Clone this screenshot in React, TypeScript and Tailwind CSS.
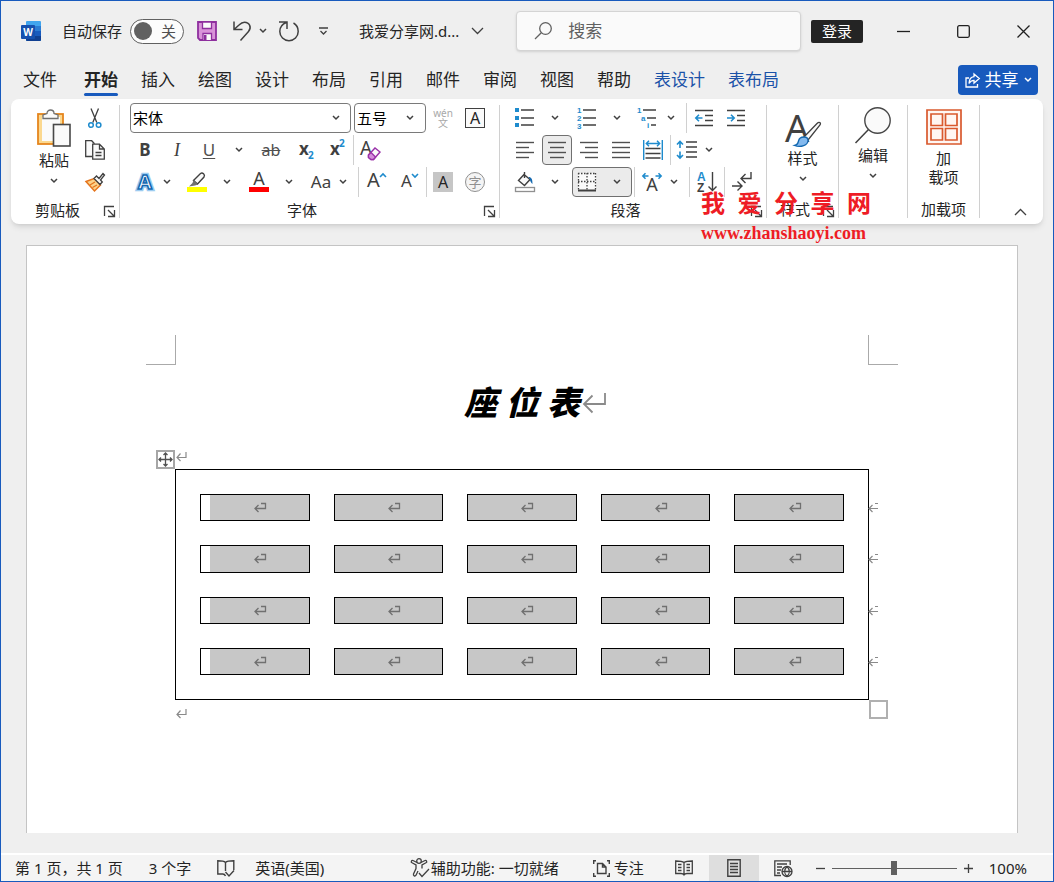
import type { ReactNode } from "react";
import clsx from "clsx";

const INK = "#404040";
const BLUE = "#1e8bcd";

const TABS = ["文件", "开始", "插入", "绘图", "设计", "布局", "引用", "邮件", "审阅", "视图", "帮助", "表设计", "表布局"];
const ROWS = [1, 2, 3, 4];
const COLS = [1, 2, 3, 4, 5];

type SvgProps = { w?: number; h?: number; className?: string; children: ReactNode };

function Svg({ w = 20, h = 20, className, children }: SvgProps) {
  return (
    <svg
      width={w}
      height={h}
      viewBox={`0 0 ${w} ${h}`}
      fill="none"
      stroke={INK}
      strokeWidth="1.3"
      className={clsx("shrink-0 overflow-visible", className)}
      aria-hidden="true"
    >
      {children}
    </svg>
  );
}

function Chevron({ big = false }: { big?: boolean }) {
  return big ? (
    <Svg w={13} h={8}>
      <path d="M1 1l5.5 5.5L12 1" />
    </Svg>
  ) : (
    <Svg w={8} h={6}>
      <path d="M1 1l3 3 3-3" strokeWidth="1.5" />
    </Svg>
  );
}

function Tool({ label, className = "w-8", children }: { label: string; className?: string; children: ReactNode }) {
  return (
    <button type="button" aria-label={label} className={clsx("flex h-8 shrink-0 items-center justify-center", className)}>
      {children}
    </button>
  );
}

function More({ label, className = "w-3" }: { label: string; className?: string }) {
  return (
    <Tool label={label} className={className}>
      <Chevron />
    </Tool>
  );
}

function Sep({ className }: { className?: string }) {
  return <span className={clsx("h-[30px] w-px shrink-0 bg-[#d0d0d0]", className)} />;
}

function Row({ children }: { children: ReactNode }) {
  return <div className="flex h-8 items-center">{children}</div>;
}

function Group({ name, className, launcher = false, children }: { name?: string; className: string; launcher?: boolean; children: ReactNode }) {
  return (
    <div className={clsx("flex shrink-0 flex-col", className)}>
      <div className="h-24">{children}</div>
      <div className={clsx("flex h-6 items-center", launcher && "pr-1")}>
        <span className="flex-1 text-center">{name}</span>
        {launcher && (
          <button type="button" aria-label={`${name}设置`} className="pt-1">
            <Svg w={11} h={11}>
              <path d="M.5 10V.5H10M4 4l6 6M10.500 4v6.500H4" />
            </Svg>
          </button>
        )}
      </div>
    </div>
  );
}

function Divider() {
  return <span className="my-[3px] w-px shrink-0 bg-[#d0d0d0]" />;
}

function ReturnMark() {
  return (
    <Svg w={11} h={10}>
      <path d="M10 0v5.500H1M4.500 1.500L1 5.500l3.500 3.500" stroke="#8a8a8a" strokeWidth="1.2" />
    </Svg>
  );
}

function CellMark() {
  return (
    <Svg w={12} h={11}>
      <path d="M7 1.500h4.500v5H1M4.500 3L1 6.500 4.500 10" stroke="#707070" strokeWidth="1.3" />
    </Svg>
  );
}

function RowEndMark() {
  return (
    <Svg w={10} h={11}>
      <path d="M7 1.500h3M10 6.500H1M4.500 3L1 6.500 4.500 10" stroke="#8a8a8a" strokeWidth="1.2" />
    </Svg>
  );
}

// one line per paragraph row, given as [start, end] pairs
function Lines({ rows }: { rows: number[][] }) {
  return (
    <Svg w={18} h={18}>
      {rows.map(([a, b], i) => (
        <path key={i} d={`M${a} ${i * 5 + 1.5}H${b}`} stroke="#505050" strokeWidth="1.4" />
      ))}
    </Svg>
  );
}

function TitleBar() {
  return (
    <header className="flex h-[60px] items-center pl-5">
      <Svg className="mr-[21px]">
        <g stroke="none">
          <rect x="5" width="15" height="20" rx="1" fill="#41a5ee" />
          <path d="M5 5h15v5H5z" fill="#2b7cd3" />
          <path d="M5 10h15v5H5z" fill="#185abd" />
          <path d="M5 15h15v4a1 1 0 0 1-1 1H6a1 1 0 0 1-1-1z" fill="#103f91" />
          <rect y="4" width="14" height="14" rx="1" fill="#1650ae" />
          <text x="7" y="15" fontSize="10" fontWeight="700" textAnchor="middle" fill="#fff">W</text>
        </g>
      </Svg>
      <label className="flex items-center gap-2">
        自动保存
        <span className="relative flex">
          <input type="checkbox" role="switch" className="h-[25px] w-[54px] appearance-none rounded-full border border-[#606060] bg-[#fcfcfc]" />
          <span className="pointer-events-none absolute inset-0 flex items-center justify-between pr-2 pl-1">
            <span className="size-[18px] rounded-full bg-[#616161]" />
            <span className="text-[#505050]">关</span>
          </span>
        </span>
      </label>
      <button type="button" aria-label="保存" className="ml-[13px]">
        <Svg>
          <path d="M1 1h18v18H3l-2-2z" fill="#d993d9" stroke="#8e2f9e" strokeWidth="1.800" />
          <path d="M5.500 1h9v6.500h-9z" fill="#fafafa" stroke="#8e2f9e" />
          <path d="M6 19v-6.500h8.500V19" fill="#fafafa" stroke="#8e2f9e" />
          <path d="M7 14h2.500v5H7z" fill="#8e2f9e" stroke="none" />
        </Svg>
      </button>
      <button type="button" aria-label="撤消" className="ml-4">
        <Svg w={19}>
          <path d="M1 .5v8h8.500M1.300 8.200L6 4C8 2 9.500 1.200 11.500 1.200c5 0 7.500 5.500 4 9.300L7.500 19.500" strokeWidth="1.500" />
        </Svg>
      </button>
      <button type="button" aria-label="撤消列表" className="ml-[7px]">
        <Chevron />
      </button>
      <button type="button" aria-label="重复" className="ml-3">
        <Svg>
          <path d="M0 1h8v7M7.500 1.500C3.300 3 .8 6.500.8 10.500a9.200 9.200 0 0 0 18.400 0c0-4-2-7-4.700-8.500" strokeWidth="1.500" />
        </Svg>
      </button>
      <button type="button" aria-label="自定义快速访问工具栏" className="ml-5">
        <Svg w={9} h={8}>
          <path d="M0 1h9M1.500 4l3 3 3-3" />
        </Svg>
      </button>
      <button type="button" className="ml-[31px] flex items-center gap-3">
        我爱分享网.d...
        <Chevron big />
      </button>
      <label className="ml-8 flex h-10 flex-1 items-center gap-4 rounded-sm border border-[#d4d4d4] bg-[#fafafa] px-[17px] shadow-sm">
        <Svg w={18} h={18}>
          <circle cx="11.500" cy="6.500" r="5.800" stroke="#616161" />
          <path d="M7.300 10.800L1 17" stroke="#616161" />
        </Svg>
        <input type="text" aria-label="搜索" placeholder="搜索" className="w-full min-w-0 bg-transparent text-[17px] outline-none placeholder:text-[#616161]" />
      </label>
      <button type="button" className="mx-[10px] h-[23px] w-[52px] rounded-xs bg-[#242424] text-white">登录</button>
      <button type="button" aria-label="最小化" className="flex h-10 w-[60px] items-center justify-center">
        <Svg w={13} h={13}>
          <path d="M0 6.500h13" stroke="#202020" />
        </Svg>
      </button>
      <button type="button" aria-label="最大化" className="flex h-10 w-[60px] items-center justify-center">
        <Svg w={13} h={13}>
          <rect x=".7" y=".7" width="11.600" height="11.600" rx="1.500" stroke="#202020" />
        </Svg>
      </button>
      <button type="button" aria-label="关闭" className="flex h-10 w-[60px] items-center justify-center">
        <Svg w={13} h={13}>
          <path d="M.5.5l12 12M12.500.5l-12 12" stroke="#202020" />
        </Svg>
      </button>
    </header>
  );
}

function TabBar() {
  return (
    <nav className="flex h-[38px] items-center gap-[23px] pr-[15px] pl-[22px] text-[17px]">
      {TABS.map((t) => (
        <a
          key={t}
          href="#"
          className={clsx(
            "relative flex h-8 items-center whitespace-nowrap",
            t === "文件" && "mr-1",
            t === "开始" && "font-bold",
            t.startsWith("表") && "text-[#1a52a8]"
          )}
        >
          {t}
          {t === "开始" && <span className="absolute inset-x-0 bottom-0 h-[3px] rounded-full bg-[#185abd]" />}
        </a>
      ))}
      <button type="button" className="ml-auto flex h-[30px] w-20 items-center justify-center gap-[5px] rounded bg-[#185abd] text-white">
        <Svg w={15} h={15}>
          <g stroke="#fff">
            <path d="M4 5H1v9h11.500v-3" />
            <path d="M9 1l5.300 4.500L9 10V7.300C6.500 7.300 5 8.500 4 10.500 4.200 6.500 6 4 9 3.700z" />
          </g>
        </Svg>
        共享
        <Svg w={8} h={6}>
          <path d="M1 1l3 3 3-3" stroke="#fff" strokeWidth="1.500" />
        </Svg>
      </button>
    </nav>
  );
}

function ClipboardGroup() {
  return (
    <Group name="剪贴板" className="w-[108px]" launcher>
      <div className="flex">
        <button type="button" className="ml-[25px] flex w-9 flex-col items-center pt-[7px]">
          <Svg w={36} h={38}>
            <rect x="2" y="5" width="25" height="30" fill="#fbd88f" stroke="#e5851d" strokeWidth="1.800" />
            <path d="M6 8h18v24H6z" fill="#fafafa" stroke="none" />
            <path d="M7 9.500V6l4-1.500C11 2.500 12.500 1 14.500 1S18 2.500 18 4.500L22 6v3.500z" fill="#fafafa" stroke="#707070" />
            <rect x="17.500" y="15.500" width="16.500" height="21.500" fill="#fafafa" stroke="#484848" strokeWidth="1.600" />
          </Svg>
          <span className="mt-[3px] leading-5">粘贴</span>
          <span className="mt-2">
            <Chevron />
          </span>
        </button>
        <div className="ml-[7px] flex flex-col">
          <Tool label="剪切">
            <Svg>
              <path d="M6 .5l5.800 14M13.500 .5L7.800 14.500" />
              <circle cx="6" cy="17" r="2.300" stroke={BLUE} strokeWidth="1.500" />
              <circle cx="13.600" cy="17" r="2.300" stroke={BLUE} strokeWidth="1.500" />
            </Svg>
          </Tool>
          <Tool label="复制">
            <Svg>
              <path d="M7 16.500H.7V.7h6l2.800 3" fill="#fafafa" />
              <path d="M7.700 4.200h6.800l4.800 4.800v10.200H7.700zM14.500 4.200V9h4.800M10.500 12.500h6M10.500 15.500h6" fill="#fafafa" />
            </Svg>
          </Tool>
          <Tool label="格式刷">
            <Svg>
              <path d="M1 9.500L9 6.500l6.500 6.500-6 6z" fill="#fbd28a" stroke="#e5751d" strokeWidth="1.500" />
              <path d="M5 13l5-3M7.500 15.500l4.500-2.500" stroke="#e5751d" />
              <path d="M9 6.500L11.500 4l2.500 2.500L18 1.500l1.500 1.500-4 5 1.800 2-2.300 2.500z" fill="#fafafa" />
            </Svg>
          </Tool>
        </div>
      </div>
    </Group>
  );
}

function FontGroup() {
  return (
    <Group name="字体" className="w-[379px]" launcher>
      <Row>
        <label className="relative ml-[10px] flex items-center">
          <select aria-label="字体" className="h-[30px] w-[221px] appearance-none rounded border border-[#7a7a7a] bg-white pl-[2px] text-black">
            <option>宋体</option>
          </select>
          <span className="pointer-events-none absolute right-[11px]">
            <Chevron />
          </span>
        </label>
        <label className="relative ml-[3px] flex items-center">
          <select aria-label="字号" className="h-[30px] w-[72px] appearance-none rounded border border-[#7a7a7a] bg-white pl-[2px] text-black">
            <option>五号</option>
          </select>
          <span className="pointer-events-none absolute right-3">
            <Chevron />
          </span>
        </label>
        <Tool label="拼音指南" className="ml-px w-8">
          <span className="flex flex-col items-center text-[10px] leading-[10px] text-[#a8a8a8]">
            <span>wén</span>
            <span>文</span>
          </span>
        </Tool>
        <Tool label="字符边框">
          <span className="flex size-5 items-center justify-center border border-[#404040] bg-[#fafafa] text-base leading-none">A</span>
        </Tool>
      </Row>
      <Row>
        <Tool label="加粗" className="ml-[9px] w-8">
          <span className="text-[17px] font-bold text-[#404040]">B</span>
        </Tool>
        <Tool label="倾斜">
          <span className="font-['Liberation_Serif',serif] text-lg text-[#404040] italic">I</span>
        </Tool>
        <Tool label="下划线">
          <span className="text-[17px] text-[#505050] underline underline-offset-2">U</span>
        </Tool>
        <More label="下划线样式" className="w-7" />
        <Tool label="删除线" className="w-9">
          <span className="text-base text-[#505050] line-through">ab</span>
        </Tool>
        <Tool label="下标">
          <Svg>
            <g stroke="none" fontWeight="700">
              <text x="4" y="15" fontSize="17" fill={INK}>x</text>
              <text x="13" y="19" fontSize="10" fill={BLUE}>2</text>
            </g>
          </Svg>
        </Tool>
        <Tool label="上标">
          <Svg>
            <g stroke="none" fontWeight="700">
              <text x="3" y="15" fontSize="17" fill={INK}>x</text>
              <text x="12" y="7" fontSize="10" fill={BLUE}>2</text>
            </g>
          </Svg>
        </Tool>
        <Sep />
        <Tool label="清除格式">
          <Svg>
            <text x="0" y="15" fontSize="19" fill={INK} stroke="none">A</text>
            <path d="M8.500 15l6.500-7 5 4-6.500 7.500h-2.500l-2.500-2z" fill="#fafafa" stroke="#9a30a8" strokeWidth="1.400" />
            <path d="M8.500 15l2.500-2.500 4.500 4.500-2 2.500h-2.500l-2.500-2z" fill="#d58fdc" stroke="#9a30a8" strokeWidth="1.400" />
          </Svg>
        </Tool>
      </Row>
      <Row>
        <Tool label="文本效果" className="ml-[9px] w-8">
          <Svg>
            <g fontSize="20" fontWeight="700" textAnchor="middle">
              <text x="10" y="17" fill="#fff" stroke="#9ccbf0" strokeWidth="4.500" aria-hidden="true">A</text>
              <text x="10" y="17" fill="#fff" stroke="#1368b0" strokeWidth="1.600">A</text>
            </g>
          </Svg>
        </Tool>
        <More label="文本效果选项" />
        <Tool label="突出显示" className="w-12">
          <Svg>
            <path d="M0 15h20v5H0z" fill="#ff0" stroke="none" />
            <path d="M6.500 8.500L13.500 1.500c2-1.500 5 1 3.500 3.500L10.500 12z" fill="#fafafa" strokeWidth="1.400" />
            <path d="M6.500 8l4.500 4.500-3 1-6 1L5.500 11z" fill="#707070" stroke="none" />
          </Svg>
        </Tool>
        <More label="突出显示颜色" />
        <Tool label="字体颜色" className="w-13">
          <Svg>
            <path d="M0 15h20v5H0z" fill="#f00" stroke="none" />
            <text x="10" y="13" fontSize="18" textAnchor="middle" fill={INK} stroke="none">A</text>
          </Svg>
        </Tool>
        <More label="字体颜色选项" className="w-2" />
        <Tool label="更改大小写" className="ml-3 w-8">
          <span className="text-[17px] text-[#404040]">Aa</span>
        </Tool>
        <More label="大小写选项" />
        <Sep className="ml-[9px]" />
        <Tool label="增大字号" className="w-9">
          <Svg>
            <text x="0" y="15" fontSize="20" fill={INK} stroke="none">A</text>
            <path d="M13 5l3-3 3 3" stroke={BLUE} strokeWidth="1.600" />
          </Svg>
        </Tool>
        <Tool label="减小字号" className="w-7">
          <Svg>
            <text x="2" y="15" fontSize="17" fill={INK} stroke="none">A</text>
            <path d="M13 2l3 3 3-3" stroke={BLUE} strokeWidth="1.600" />
          </Svg>
        </Tool>
        <Sep className="ml-[3px]" />
        <Tool label="字符底纹">
          <span className="flex size-5 items-center justify-center bg-[#c6c6c6] text-base leading-none">A</span>
        </Tool>
        <Tool label="带圈字符">
          <span className="flex size-5 items-center justify-center rounded-full border border-[#909090] bg-[#f4f4f4] text-[13px] leading-none text-[#909090]">字</span>
        </Tool>
      </Row>
    </Group>
  );
}

function ParagraphGroup() {
  return (
    <Group name="段落" className="w-[266px]" launcher>
      <Row>
        <Tool label="项目符号" className="ml-[9px] w-8">
          <Svg>
            <path d="M0 0h4v4H0zM0 8h4v4H0zM0 15h4v4H0z" fill={BLUE} stroke="none" />
            <path d="M6 2h13M6 10h13M6 17h13" strokeWidth="1.400" />
          </Svg>
        </Tool>
        <More label="项目符号库" className="w-7" />
        <Tool label="编号" className="w-9">
          <Svg className="font-['Liberation_Sans',sans-serif]">
            <g stroke="none" fill={BLUE} fontSize="8" fontWeight="700">
              <text x="0" y="5">1</text>
              <text x="0" y="13">2</text>
              <text x="0" y="21">3</text>
            </g>
            <path d="M6 2h13M6 10h13M6 17h13" strokeWidth="1.400" />
          </Svg>
        </Tool>
        <More label="编号库" className="w-6" />
        <Tool label="多级列表" className="w-9">
          <Svg className="font-['Liberation_Sans',sans-serif]">
            <g stroke="none" fill={BLUE} fontSize="8" fontWeight="700">
              <text x="0" y="5">1</text>
              <text x="4" y="13">a</text>
              <text x="10" y="20">i</text>
            </g>
            <path d="M6 2h13M10 10h9M14 17h5" strokeWidth="1.400" />
          </Svg>
        </Tool>
        <More label="列表库" />
        <Sep className="ml-[9px]" />
        <Tool label="减少缩进" className="ml-px w-8">
          <Svg w={18} h={18}>
            <path d="M0 1.500h18M10 6.500h8M10 11.500h8M0 16.500h18" strokeWidth="1.400" />
            <path d="M7.500 9H1M4 5.800L.8 9 4 12.200" stroke={BLUE} strokeWidth="1.600" />
          </Svg>
        </Tool>
        <Tool label="增加缩进">
          <Svg w={18} h={18}>
            <path d="M0 1.500h18M10 6.500h8M10 11.500h8M0 16.500h18" strokeWidth="1.400" />
            <path d="M0 9h6.500M4 5.800L7.200 9 4 12.200" stroke={BLUE} strokeWidth="1.600" />
          </Svg>
        </Tool>
      </Row>
      <Row>
        <Tool label="左对齐" className="ml-[9px] w-8">
          <Lines rows={[[0, 18], [0, 13], [0, 18], [0, 13]]} />
        </Tool>
        <Tool label="居中">
          <span className="flex size-[30px] items-center justify-center rounded border border-[#707070] bg-[#ebebeb]">
            <Lines rows={[[0, 18], [2, 16], [0, 18], [2, 16]]} />
          </span>
        </Tool>
        <Tool label="右对齐">
          <Lines rows={[[0, 18], [5, 18], [0, 18], [5, 18]]} />
        </Tool>
        <Tool label="两端对齐">
          <Lines rows={[[0, 18], [0, 18], [0, 18], [0, 18]]} />
        </Tool>
        <Tool label="分散对齐">
          <Svg>
            <path d="M2.500 8.500h15M2.500 13.500h15M2.500 18h15" strokeWidth="1.400" />
            <path d="M.7 0v20M19.300 0v20M3.500 3.500h13M6 .8L3.300 3.500 6 6.200M14 .8l2.700 2.700L14 6.200" stroke={BLUE} strokeWidth="1.400" />
          </Svg>
        </Tool>
        <Sep className="ml-px" />
        <Tool label="行距">
          <Svg>
            <path d="M9 2h11M9 7h11M9 12h11M9 17h11" strokeWidth="1.400" />
            <path d="M3 1.500v6.500M0 4.500l3-3 3 3M3 11.500V18M0 15l3 3 3-3" stroke={BLUE} strokeWidth="1.600" />
          </Svg>
        </Tool>
        <More label="行距选项" />
      </Row>
      <Row>
        <Tool label="底纹" className="ml-[9px] w-8">
          <Svg>
            <path d="M9 2.500L3.500 8.500 9.500 13.500 15 7.500zM9.500 0v6" fill="#fafafa" strokeWidth="1.400" />
            <path d="M13.500 5c3 0 4 2 4 7-1.500-1.500-2.500-3-2.500-4.500z" fill="#1368b0" stroke="none" />
            <rect x=".5" y="15.500" width="19" height="4" fill="#fff" stroke="#909090" />
          </Svg>
        </Tool>
        <More label="底纹颜色" className="w-7" />
        <div className="ml-[3px] flex h-[30px] w-[60px] items-center rounded border border-[#707070] bg-[#ebebeb]">
          <Tool label="边框" className="w-7">
            <Svg>
              <path d="M1 1h18v18H1z" fill="#fafafa" stroke="none" />
              <path d="M1 1.500h18M1 9.500h18M1.500 1v17M10 1v17M18.500 1v17" strokeDasharray="1.500 1.500" />
              <path d="M1 18.500h18" strokeWidth="2" />
            </Svg>
          </Tool>
          <More label="边框选项" className="w-8" />
        </div>
        <Sep className="ml-[2px]" />
        <Tool label="中文版式" className="ml-px w-8">
          <Svg>
            <text x="10" y="19" fontSize="18" textAnchor="middle" fill={INK} stroke="none">A</text>
            <path d="M6.500 4H.8M3.500 1.200L.8 4l2.700 2.800M13.500 4h5.700M16.500 1.200L19.200 4l-2.700 2.800" stroke={BLUE} strokeWidth="1.500" />
          </Svg>
        </Tool>
        <More label="中文版式选项" />
        <Sep className="ml-[9px]" />
        <Tool label="排序" className="ml-px w-8">
          <Svg className="font-['Liberation_Sans',sans-serif]">
            <g stroke="none" fontSize="12">
              <text x="0" y="9" fontWeight="700" fill={BLUE}>A</text>
              <text x="0" y="20" fontWeight="700" fill={INK}>Z</text>
            </g>
            <path d="M15.500 0v18.500M11.500 14.500l4 4 4-4" strokeWidth="1.400" />
          </Svg>
        </Tool>
        <Sep className="ml-px" />
        <Tool label="显示编辑标记" className="ml-px w-8">
          <Svg>
            <path d="M19 0v6.500H9.500M13.500 2L9 6.500l4.500 4.500M0 14h9.500M5.500 9.500L10 14l-4.500 4.500" strokeWidth="1.400" />
          </Svg>
        </Tool>
      </Row>
    </Group>
  );
}

function Ribbon() {
  return (
    <section aria-label="开始" className="mx-[10px] flex h-[125px] rounded-lg bg-white py-[3px] shadow-md">
      <ClipboardGroup />
      <Divider />
      <FontGroup />
      <Divider />
      <ParagraphGroup />
      <Divider />
      <Group name="样式" className="w-[71px]" launcher>
        <button type="button" className="flex w-full flex-col items-center pt-[7px]">
          <Svg w={38} h={39}>
            <text x="1" y="33" fontSize="38" fill={INK} stroke="none">A</text>
            <path d="M20 28L33 14.500c2-2 4.500-1 3 1.500L24 31z" fill="#fafafa" />
            <path d="M20 28c2.500 0 4 1.500 4 3.500 0 4.500-7 7.500-13.500 5 2.500-.5 3.500-2 4-4.500.5-2.500 3-4 5.500-4z" fill="#83b9ee" stroke="#1368b0" />
          </Svg>
          <span className="leading-5">样式</span>
          <span className="mt-2">
            <Chevron />
          </span>
        </button>
      </Group>
      <Divider />
      <Group className="w-[68px]">
        <button type="button" className="flex w-full flex-col items-center pt-[5px]">
          <Svg w={36} h={38}>
            <circle cx="22.500" cy="13.500" r="12.700" fill="#fafafa" stroke="#484848" strokeWidth="1.400" />
            <path d="M13.500 22.500L.5 36" strokeWidth="1.500" />
          </Svg>
          <span className="leading-5">编辑</span>
          <span className="mt-2">
            <Chevron />
          </span>
        </button>
      </Group>
      <Divider />
      <Group name="加载项" className="w-[71px]">
        <button type="button" className="flex w-full flex-col items-center pt-[7px] leading-[19px]">
          <Svg w={36} h={36}>
            <path d="M1 1h34v34H1zM5 5h11.500v11.500H5zM19.500 5H31v11.500H19.500zM5 19.500h11.500V31H5zM19.500 19.500H31V31H19.500z" fill="#fff6f2" stroke="#d9592e" strokeWidth="1.700" />
          </Svg>
          <span className="mt-1">加</span>
          <span>载项</span>
        </button>
      </Group>
      <Divider />
      <button type="button" aria-label="折叠功能区" className="mr-4 mb-[5px] ml-auto self-end">
        <Svg w={13} h={8}>
          <path d="M1 7l5.500-5.500L12 7" />
        </Svg>
      </button>
    </section>
  );
}

function SeatTable() {
  return (
    <div className="relative mx-[148px]">
      <span className="absolute right-full bottom-full flex size-[19px] items-center justify-center border-2 border-[#a6a6a6] bg-white">
        <Svg w={15} h={15}>
          <path d="M7.500 1v13M1 7.500h13M5.500 3l2-2 2 2M5.500 12l2 2 2-2M3 5.500l-2 2 2 2M12 5.500l2 2-2 2" stroke="#505050" />
        </Svg>
      </span>
      <table aria-label="座位表" className="h-[231px] w-full table-fixed border-separate border-spacing-6 border border-black">
        <tbody>
          {ROWS.map((r) => (
            <tr key={r}>
              {COLS.map((c) => (
                <td
                  key={c}
                  className={clsx(
                    "relative border border-black p-0 pl-[11px]",
                    c === 1 ? "bg-[linear-gradient(to_right,#fff_9px,#c7c7c7_9px)]" : "bg-[#c7c7c7]"
                  )}
                >
                  <span className="flex justify-center">
                    <CellMark />
                  </span>
                  {c === 5 && (
                    <span className="absolute top-[7px] left-full ml-[25px]">
                      <RowEndMark />
                    </span>
                  )}
                </td>
              ))}
            </tr>
          ))}
        </tbody>
      </table>
      <span className="absolute top-full left-full size-[19px] border-2 border-[#b0b0b0] bg-white" />
    </div>
  );
}

function DocumentPage() {
  return (
    <main className="mt-[21px] mr-[35px] mb-5 ml-[25px] flex-1 border border-b-0 border-[#c4c4c4] bg-white">
      <div className="mx-[119px] mt-[89px] flex justify-between">
        <span className="size-[30px] border-r border-b border-[#aaaaaa]" />
        <span className="size-[30px] border-b border-l border-[#aaaaaa]" />
      </div>
      <h1 className="mt-3 flex justify-center text-[33px] leading-[52px] font-black text-black italic">
        <span className="relative">
          座 位 表
          <span className="absolute top-4 left-full ml-[3px]">
            <Svg w={23} h={20}>
              <path d="M22 0v11H1M9.500 2.500L1 11l8.500 8.500" stroke="#8a8a8a" strokeWidth="1.800" />
            </Svg>
          </span>
        </span>
      </h1>
      <div className="mx-[149px] mt-[23px] flex h-[17px]">
        <ReturnMark />
      </div>
      <SeatTable />
      <div className="mx-[149px] mt-[9px]">
        <ReturnMark />
      </div>
    </main>
  );
}

function StatusBar() {
  return (
    <footer className="flex h-7 items-center border-t-2 border-white bg-[#f4f4f4] pr-[26px] pl-[14px] whitespace-nowrap">
      <span>第 1 页，共 1 页</span>
      <span className="ml-[26px]">3 个字</span>
      <button type="button" aria-label="校对" className="ml-[26px]">
        <Svg w={18} h={17}>
          <path d="M8.500 2.500C7 1 5 .8 .8 .8V14h5c1.500 0 2.200.8 2.700 2M8.500 2.500C10 1 12 .8 16.800.8V10M8.500 2.500V11M8.500 12l3.500 4 5-5.500" strokeWidth="1.400" />
        </Svg>
      </button>
      <span className="ml-5">英语(美国)</span>
      <button type="button" className="ml-auto flex items-center gap-px">
        <Svg>
          <circle cx="9" cy="3" r="2.300" />
          <path d="M7 4.500L3 2.500C1.500 2 .5 4 2 4.800L6 7v3.500L3.500 16c-.5 1.800 1.500 2.800 2.500 1.200L8 13M11 4.500l4-2c1.500-.5 2.500 1.500 1 2.300L12 7v3.500M9 15l3 3.500L19 11" />
        </Svg>
        辅助功能: 一切就绪
      </button>
      <button type="button" className="ml-[34px] flex items-center gap-1">
        <Svg w={17} h={17}>
          <path d="M3 .7H.7V4M14 .7h2.300V4M3 16.300H.7V13M14 16.300h2.300V13M4.500 3.500h5l3.500 3.500v6.500H4.500zM9.500 3.500V7H13" strokeWidth="1.400" />
        </Svg>
        专注
      </button>
      <button type="button" aria-label="阅读视图" className="ml-[15px] flex w-[50px] justify-center">
        <Svg w={18} h={16}>
          <path d="M9 2.500C7 1 5 1 .7 1v12.500H6c1.500 0 2.300.5 3 1.500.7-1 1.500-1.500 3-1.500h5.300V1C13 1 11 1 9 2.500zV15M3 4.500h3.500M3 7.500h3.500M3 10.500h3.500M11.500 4.500H15M11.500 7.500H15M11.500 10.500H15" />
        </Svg>
      </button>
      <button type="button" aria-label="页面视图" className="flex h-[26px] w-[50px] items-center justify-center bg-[#dedede]">
        <Svg w={14} h={18}>
          <path d="M.8.8h12.400v16.400H.8zM3 4.500h8M3 7.500h8M3 10.500h8M3 13.500h8" strokeWidth="1.400" />
        </Svg>
      </button>
      <button type="button" aria-label="Web 版式视图" className="flex w-[50px] justify-center">
        <Svg w={19} h={17}>
          <path d="M7 15.500H.8V.8h15.400V5M3 4h10M3 7h5M3 10h4M3 13h3" />
          <circle cx="13" cy="11.500" r="5" fill="#f4f4f4" />
          <path d="M8 11.500h10M13 6.500c-3 3-3 7 0 10M13 6.500c3 3 3 7 0 10" />
        </Svg>
      </button>
      <button type="button" aria-label="缩小" className="ml-[7px]">
        <Svg w={9} h={9}>
          <path d="M0 4.500h9" />
        </Svg>
      </button>
      <input
        type="range"
        aria-label="显示比例"
        defaultValue={50}
        className="mx-[7px] h-4 w-[125px] appearance-none bg-transparent [&::-webkit-slider-runnable-track]:h-px [&::-webkit-slider-runnable-track]:bg-[#606060] [&::-webkit-slider-thumb]:-mt-[7px] [&::-webkit-slider-thumb]:h-[14px] [&::-webkit-slider-thumb]:w-[6px] [&::-webkit-slider-thumb]:appearance-none [&::-webkit-slider-thumb]:bg-[#606060]"
      />
      <button type="button" aria-label="放大">
        <Svg w={9} h={9}>
          <path d="M0 4.500h9M4.500 0v9" />
        </Svg>
      </button>
      <span className="ml-4">100%</span>
    </footer>
  );
}

export default function App() {
  return (
    <div className="relative flex min-h-screen flex-col border border-[#185abd] bg-[#efefef] font-['Noto_Sans','Noto_Sans_CJK_SC',sans-serif] text-[15px] leading-5 text-[#242424]">
      <TitleBar />
      <TabBar />
      <Ribbon />
      <DocumentPage />
      <StatusBar />
      <div className="pointer-events-none absolute top-[187px] left-[700px] text-[#ee1c25]">
        <p className="text-2xl leading-[30px] font-bold whitespace-pre">我  爱  分  享  网</p>
        <p className="font-['Liberation_Serif',serif] text-[18px] leading-[30px] font-bold">www.zhanshaoyi.com</p>
      </div>
    </div>
  );
}
